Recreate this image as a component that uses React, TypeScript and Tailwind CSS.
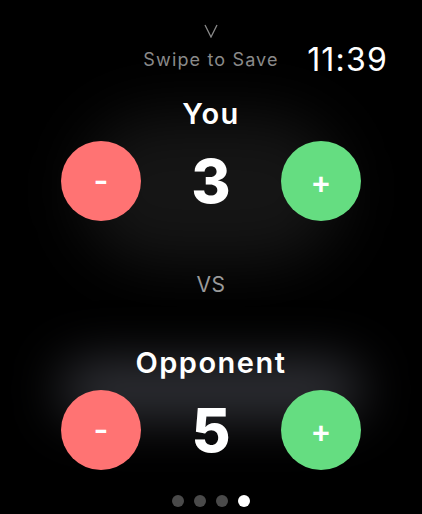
import React from "react";

function Counter({ label, value }: { label: string; value: number }) {
  return (
    <div className="flex flex-col items-center">
      <div className="text-[29px] leading-none font-semibold text-white tracking-[1.5px]">{label}</div>
      <div className="mt-[13px] flex w-[300px] items-center justify-between">
        <div className="flex h-[80px] w-[80px] items-center justify-center rounded-full bg-[#ff7373] text-[32px] leading-none font-semibold text-white">
          -
        </div>
        <div className="text-[60px] leading-none font-extrabold text-white">{value}</div>
        <div className="flex h-[80px] w-[80px] items-center justify-center rounded-full bg-[#65dd81] text-[31px] leading-none font-semibold text-white">
          +
        </div>
      </div>
    </div>
  );
}

export default function App() {
  return (
    <div
      className="relative h-[514px] w-[422px] overflow-hidden bg-black"
      style={{ fontFamily: "Inter, 'Noto Sans', sans-serif" }}
    >
      <div className="pointer-events-none absolute left-[80px] top-[115px] h-[150px] w-[262px] rounded-full bg-[#151515] blur-[30px]" />
      <div className="pointer-events-none absolute left-[60px] top-[362px] h-[55px] w-[302px] rounded-full bg-[#34353b] blur-[26px]" />

      <div className="relative flex flex-col items-center">
        <svg width="14" height="14" viewBox="0 0 14 14" className="mt-[24px]">
          <path d="M1 1 L7 13 L13 1" fill="none" stroke="#8a8a8a" strokeWidth="1.3" />
        </svg>
        <div className="mt-[6px] grid w-full grid-cols-[1fr_auto_1fr] items-center">
          <div />
          <div className="text-[18px] leading-none tracking-[1.15px] text-[#8a8a8a]">Swipe to Save</div>
          <div className="flex justify-end pr-[34px] text-[32px] leading-none tracking-[1.2px] text-white">11:39</div>
        </div>

        <div className="mt-[23px]">
          <Counter label="You" value={3} />
        </div>

        <div className="mt-[53px] text-[21px] leading-none tracking-[0.5px] text-[#9a9a9a]">VS</div>

        <div className="mt-[53px]">
          <Counter label="Opponent" value={5} />
        </div>

        <div className="mt-[25px] flex gap-[10px]">
          <div className="h-[12px] w-[12px] rounded-full bg-[#4a4a4a]" />
          <div className="h-[12px] w-[12px] rounded-full bg-[#4a4a4a]" />
          <div className="h-[12px] w-[12px] rounded-full bg-[#4a4a4a]" />
          <div className="h-[12px] w-[12px] rounded-full bg-white" />
        </div>
      </div>
    </div>
  );
}
